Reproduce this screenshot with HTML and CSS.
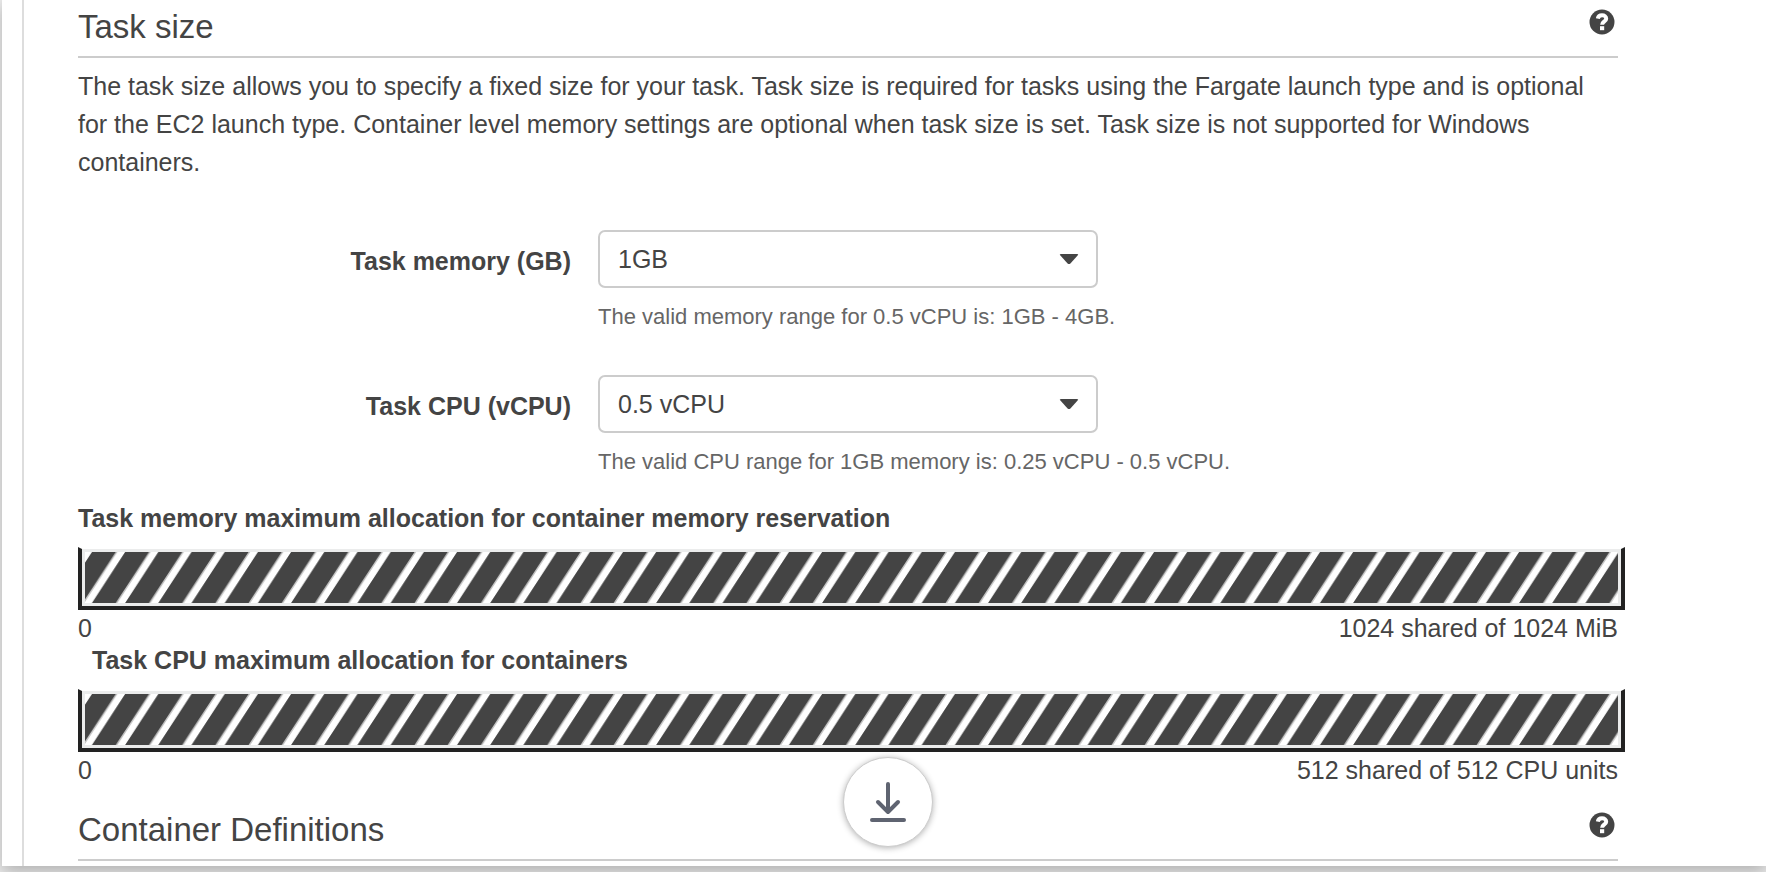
FILE: index.html
```html
<!DOCTYPE html>
<html lang="en">
<head>
<meta charset="utf-8">
<title>Task size</title>
<link rel="stylesheet" href="styles.css">
</head>
<body>
<svg class="defs" aria-hidden="true">
  <defs>
    <pattern id="stripes" width="33.19" height="51" patternUnits="userSpaceOnUse">
      <path class="stripe-edge" d="M7 51L40.2 0H65.7L32.5 51ZM-26.2 51L7 0H32.5L-.7 51Z"/>
      <path class="stripe" d="M7 51L40.2 0H64L30.8 51ZM-26.2 51L7 0H30.8L-2.4 51Z"/>
    </pattern>
    <symbol id="help" viewBox="0 0 26 26">
      <circle class="help-disc" cx="13" cy="13" r="12.5"/>
      <path class="help-hook" d="M8.8 9.6C9.2 7.4 10.8 6.3 13 6.3C15.5 6.3 17.2 7.7 17.2 9.7C17.2 12.4 13.1 12.5 13.1 15.8"/>
      <path class="help-dot" d="M11 17.2H15.2V21.2H11Z"/>
    </symbol>
  </defs>
</svg>
<main class="panel">
  <div class="content">
    <header class="section-head">
      <h2 class="section-title">Task size</h2>
      <button class="help" type="button" aria-label="Help: task size"><svg class="help-icon"><use href="#help"/></svg></button>
    </header>
    <p class="intro">The task size allows you to specify a fixed size for your task. Task size is required for tasks using the Fargate launch type and is optional for the EC2 launch type. Container level memory settings are optional when task size is set. Task size is not supported for Windows containers.</p>
    <form class="fields">
      <div class="field">
        <label class="field-label" for="memory">Task memory (GB)</label>
        <div class="field-body">
          <div class="select-box">
            <select class="select" id="memory"><option>1GB</option><option>2GB</option><option>3GB</option><option>4GB</option></select>
            <svg class="caret" viewBox="0 0 20 12" aria-hidden="true"><path d="M2 1H18Q20 1 18.6 2.6L11.4 10.4Q10 11.8 8.6 10.4L1.4 2.6Q0 1 2 1Z"/></svg>
          </div>
          <p class="hint">The valid memory range for 0.5 vCPU is: 1GB - 4GB.</p>
        </div>
      </div>
      <div class="field">
        <label class="field-label" for="cpu">Task CPU (vCPU)</label>
        <div class="field-body">
          <div class="select-box">
            <select class="select" id="cpu"><option>0.5 vCPU</option><option>0.25 vCPU</option></select>
            <svg class="caret" viewBox="0 0 20 12" aria-hidden="true"><path d="M2 1H18Q20 1 18.6 2.6L11.4 10.4Q10 11.8 8.6 10.4L1.4 2.6Q0 1 2 1Z"/></svg>
          </div>
          <p class="hint">The valid CPU range for 1GB memory is: 0.25 vCPU - 0.5 vCPU.</p>
        </div>
      </div>
    </form>
    <section class="allocation">
      <h3 class="allocation-title">Task memory maximum allocation for container memory reservation</h3>
      <div class="meter"><svg class="meter-fill" aria-hidden="true"><rect width="100%" height="100%" fill="url(#stripes)"/></svg></div>
      <div class="scale"><span>0</span><span>1024 shared of 1024 MiB</span></div>
    </section>
    <section class="allocation">
      <h3 class="allocation-title allocation-title-inset">Task CPU maximum allocation for containers</h3>
      <div class="meter"><svg class="meter-fill" aria-hidden="true"><rect width="100%" height="100%" fill="url(#stripes)"/></svg></div>
      <div class="scale"><span>0</span><span>512 shared of 512 CPU units</span></div>
    </section>
    <header class="section-head section-head-next">
      <h2 class="section-title">Container Definitions</h2>
      <button class="help" type="button" aria-label="Help: container definitions"><svg class="help-icon"><use href="#help"/></svg></button>
    </header>
  </div>
</main>
<button class="download" type="button" aria-label="Scroll to bottom">
  <svg class="download-icon" viewBox="0 0 36 40" aria-hidden="true"><path d="M18 2V29M8 20L18 30L28 20M2 38H34"/></svg>
</button>
</body>
</html>
```
FILE: styles.css
```css
* {
  box-sizing: border-box;
}

body {
  margin: 0;
  padding: 0 0 6px 2px;
  background: #ebebeb;
  color: #444;
  font: 25px/38px "Liberation Sans", Arial, sans-serif;
  overflow: hidden;
}

h2, h3, p {
  margin: 0;
}

.defs {
  position: absolute;
  width: 0;
  height: 0;
}

.stripe { fill: #444; }
.stripe-edge { fill: #c4c4c4; }

.panel {
  padding-left: 20px;
  background: #fff;
  box-shadow: 0 6px 16px rgba(0, 0, 0, 0.25);
}

.content {
  padding: 0 148px 5px 54px;
  border-left: 2px solid #ddd;
}

.section-head {
  display: flex;
  justify-content: space-between;
  height: 58px;
  padding-top: 8px;
  border-bottom: 2px solid #ccc;
}

.section-head-next {
  margin-top: 18px;
}

.section-title {
  font-size: 33px;
  font-weight: 400;
}

.help {
  width: 26px;
  height: 26px;
  margin: 1px 3px 0 0;
  padding: 0;
  border: 0;
  background: none;
}

.help-icon {
  display: block;
  width: 26px;
  height: 26px;
}

.help-disc { fill: #444; }
.help-hook { fill: none; stroke: #fff; stroke-width: 4; }
.help-dot { fill: #fff; }

.intro {
  padding-top: 9px;
}

.fields {
  display: grid;
  gap: 41px;
  padding-top: 49px;
}

.field {
  display: grid;
  grid-template-columns: 493px 1fr;
  gap: 27px;
}

.field-label {
  padding-top: 12px;
  font-weight: 700;
  text-align: right;
}

.select-box {
  display: grid;
  align-items: center;
  width: 500px;
}

.select {
  grid-area: 1 / 1;
  width: 100%;
  height: 58px;
  padding: 0 60px 0 18px;
  border: 2px solid #ccc;
  border-radius: 7px;
  appearance: none;
  background: #fff;
  color: #444;
  font: inherit;
}

.caret {
  grid-area: 1 / 1;
  justify-self: end;
  width: 20px;
  height: 12px;
  margin-right: 19px;
  fill: #444;
  pointer-events: none;
}

.hint {
  padding-top: 12px;
  color: #666;
  font-size: 22px;
  line-height: 34px;
}

.allocation-title {
  font-size: 25px;
  line-height: 34px;
}

.fields + .allocation {
  padding-top: 22px;
}

.allocation-title-inset {
  padding-left: 14px;
}

.meter {
  margin: 12px -7px 0 0;
  padding: 3px;
  border: 4px solid #222;
  border-top: 2px solid transparent;
  background: #ebecec padding-box;
}

.meter-fill {
  display: block;
  width: 100%;
  height: 51px;
  background: #fff;
}

.scale {
  display: flex;
  justify-content: space-between;
  padding-top: 3px;
  line-height: 30px;
}

.download {
  position: absolute;
  top: 757px;
  left: calc(50% - 40px);
  display: grid;
  place-items: center;
  width: 90px;
  height: 90px;
  border: 1px solid #ccc;
  border-radius: 50%;
  background: #fff;
  box-shadow: 0 1px 6px rgba(0, 0, 0, 0.3);
}

.download-icon {
  width: 36px;
  height: 40px;
  fill: none;
  stroke: #5f6471;
  stroke-width: 4;
  stroke-linecap: round;
  stroke-linejoin: round;
}
```
